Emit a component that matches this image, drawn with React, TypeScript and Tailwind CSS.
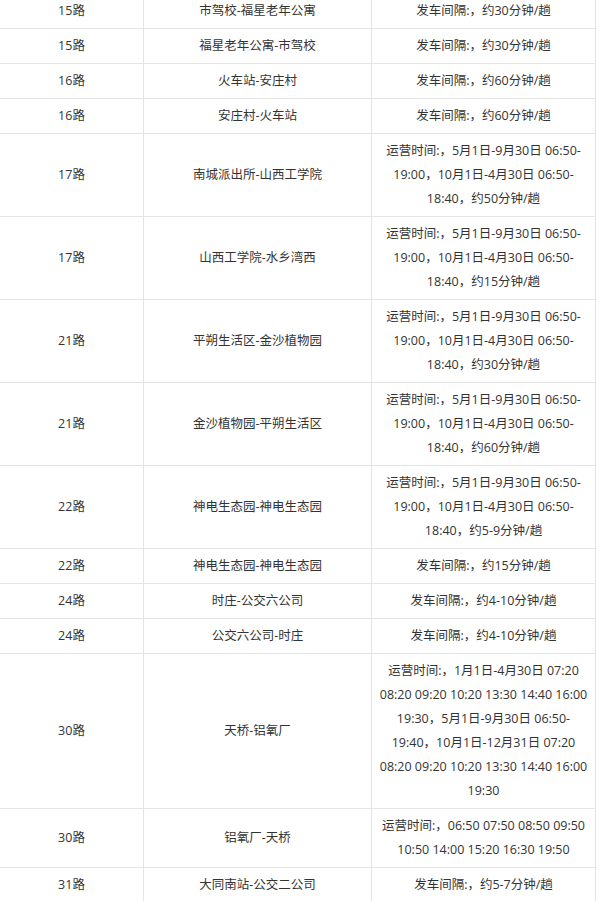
import React from 'react';

type Row = { route: string; stops: string; info: string[] };

const rows: Row[] = [
  { route: '15路', stops: '市驾校-福星老年公寓', info: ['发车间隔:，约30分钟/趟'] },
  { route: '15路', stops: '福星老年公寓-市驾校', info: ['发车间隔:，约30分钟/趟'] },
  { route: '16路', stops: '火车站-安庄村', info: ['发车间隔:，约60分钟/趟'] },
  { route: '16路', stops: '安庄村-火车站', info: ['发车间隔:，约60分钟/趟'] },
  {
    route: '17路',
    stops: '南城派出所-山西工学院',
    info: ['运营时间:，5月1日-9月30日 06:50-', '19:00，10月1日-4月30日 06:50-', '18:40，约50分钟/趟'],
  },
  {
    route: '17路',
    stops: '山西工学院-水乡湾西',
    info: ['运营时间:，5月1日-9月30日 06:50-', '19:00，10月1日-4月30日 06:50-', '18:40，约15分钟/趟'],
  },
  {
    route: '21路',
    stops: '平朔生活区-金沙植物园',
    info: ['运营时间:，5月1日-9月30日 06:50-', '19:00，10月1日-4月30日 06:50-', '18:40，约30分钟/趟'],
  },
  {
    route: '21路',
    stops: '金沙植物园-平朔生活区',
    info: ['运营时间:，5月1日-9月30日 06:50-', '19:00，10月1日-4月30日 06:50-', '18:40，约60分钟/趟'],
  },
  {
    route: '22路',
    stops: '神电生态园-神电生态园',
    info: ['运营时间:，5月1日-9月30日 06:50-', '19:00，10月1日-4月30日 06:50-', '18:40，约5-9分钟/趟'],
  },
  { route: '22路', stops: '神电生态园-神电生态园', info: ['发车间隔:，约15分钟/趟'] },
  { route: '24路', stops: '时庄-公交六公司', info: ['发车间隔:，约4-10分钟/趟'] },
  { route: '24路', stops: '公交六公司-时庄', info: ['发车间隔:，约4-10分钟/趟'] },
  {
    route: '30路',
    stops: '天桥-铝氧厂',
    info: [
      '运营时间:，1月1日-4月30日 07:20',
      '08:20 09:20 10:20 13:30 14:40 16:00',
      '19:30，5月1日-9月30日 06:50-',
      '19:40，10月1日-12月31日 07:20',
      '08:20 09:20 10:20 13:30 14:40 16:00',
      '19:30',
    ],
  },
  {
    route: '30路',
    stops: '铝氧厂-天桥',
    info: ['运营时间:，06:50 07:50 08:50 09:50', '10:50 14:00 15:20 16:30 19:50'],
  },
  { route: '31路', stops: '大同南站-公交二公司', info: ['发车间隔:，约5-7分钟/趟'] },
];

export default function App() {
  return (
    <div className="w-[600px] h-[901px] overflow-hidden bg-white">
      <table
        className="-mt-[7px] -ml-px w-[596px] table-fixed border-collapse text-[12.5px] leading-6 text-[#333]"
        style={{ fontFamily: '"Open Sans", "Noto Sans CJK SC", sans-serif' }}
      >
        <colgroup>
          <col className="w-[144px]" />
          <col className="w-[228px]" />
          <col className="w-[224px]" />
        </colgroup>
        <tbody>
          {rows.map((r, i) => (
            <tr key={i}>
              <td className="border border-[#e4e4e4] px-2 py-[5px] text-center">{r.route}</td>
              <td className="border border-[#e4e4e4] px-2 py-[5px] text-center">{r.stops}</td>
              <td className="border border-[#e4e4e4] px-1 py-[5px] text-center whitespace-nowrap">
                {r.info.map((line, j) => (
                  <div key={j}>{line}</div>
                ))}
              </td>
            </tr>
          ))}
        </tbody>
      </table>
    </div>
  );
}
